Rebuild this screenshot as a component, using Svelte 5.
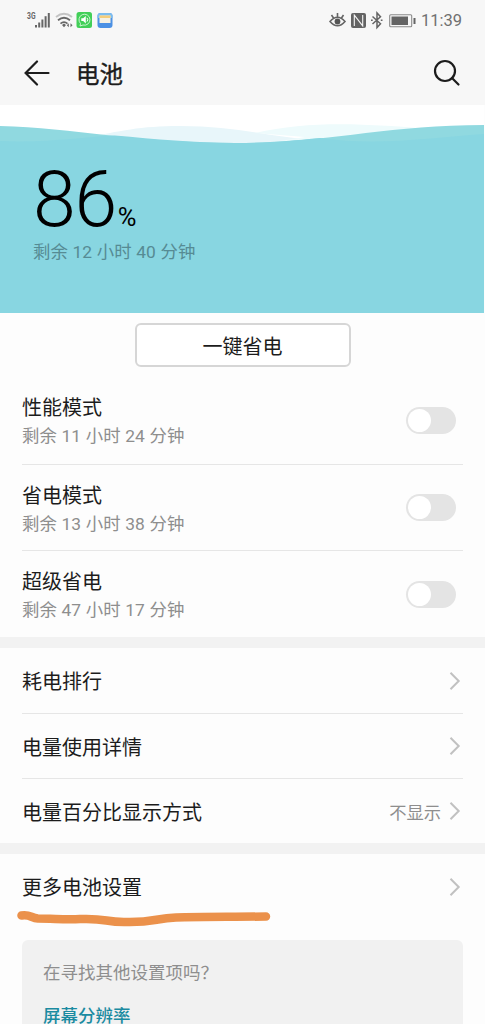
<script lang="ts">
  type Mode = {
    name: string;
    remaining: string;
    enabled: boolean;
  };

  type Link = {
    label: string;
    value?: string;
  };

  let modes = $state<Mode[]>([
    { name: "性能模式", remaining: "剩余 11 小时 24 分钟", enabled: false },
    { name: "省电模式", remaining: "剩余 13 小时 38 分钟", enabled: false },
    { name: "超级省电", remaining: "剩余 47 小时 17 分钟", enabled: false },
  ]);

  const links: Link[] = [
    { label: "耗电排行" },
    { label: "电量使用详情" },
    { label: "电量百分比显示方式", value: "不显示" },
  ];

  const level = 86;
</script>

{#snippet chevron()}
  <svg class="chevron" width="12" height="20" viewBox="0 0 12 20" aria-hidden="true">
    <path d="M1.5 1.8 9.7 10l-8.2 8.2" />
  </svg>
{/snippet}

<div class="screen">
  <header class="top">
    <div class="status">
      <svg width="90" height="20" viewBox="0 0 90 20" aria-hidden="true">
        <text x="1" y="9" class="network" textLength="8.5" lengthAdjust="spacingAndGlyphs">3G</text>
        <g fill="#666">
          <rect x="9" y="15" width="2" height="2.5" />
          <rect x="12.2" y="12.5" width="2" height="5" />
          <rect x="15.4" y="9.5" width="2" height="8" />
          <rect x="18.6" y="6.2" width="2" height="11.3" />
          <rect x="21.8" y="3" width="2" height="14.5" />
        </g>
        <g fill="none" stroke-width="1.8">
          <path d="M30 7q8-6.500 16 0" stroke="#c4c4c4" />
          <path d="M32 10.300q6-5 12 0M34.500 13.600q3.500-3 7 0" stroke="#666" />
        </g>
        <path d="m36 15 2-1.500 2 1.500-2 2.200zM40.800 15.200l2-2v4zM46.500 15.200l-2-2v4z" fill="#666" />
        <rect x="50.500" y="2" width="15.500" height="16" rx="2.500" fill="#42cf58" />
        <path d="M54 16 54.500 13.500A5.500 5.500 0 1 1 57 15z" fill="none" stroke="#c9f4cf" />
        <path d="M55.300 8.300h1.900l2.600-2.300v7.400l-2.600-2.300h-1.900z" fill="#fff" />
        <path d="M61 7.800q1.500 1.900 0 3.800" fill="none" stroke="#fff" />
        <rect x="71.500" y="3" width="15" height="15" rx="3" fill="#4c91e4" />
        <path d="M71.500 8V6a3 3 0 0 1 3-3h9a3 3 0 0 1 3 3v2z" fill="#7bbdf0" />
        <rect x="73.500" y="5.500" width="11" height="7.500" fill="#f5f1e4" />
        <rect x="73.500" y="5.500" width="11" height="2.500" fill="#f4ce7c" />
      </svg>

      <div class="status-right">
        <svg width="88" height="20" viewBox="0 0 88 20" aria-hidden="true">
          <g fill="none" stroke="#646464" stroke-width="1.600">
            <path d="M1 11.500q7.500-8.500 15 0-7.500 8.500-15 0zM2.500 5l2 3M8.500 3v3.500M14.500 5l-2 3" />
          </g>
          <circle cx="8.500" cy="11.500" r="2.900" fill="#555" />
          <rect x="22" y="3" width="15" height="15" rx="2" fill="#646464" />
          <path d="M25.300 16V5l8.200 10.500M25.500 5.500 33.700 16V5" fill="none" stroke="#f7f7f7" stroke-width="1.100" />
          <path d="m27.800 3 4 5V3M27.200 18v-5l4 5" fill="#646464" />
          <path d="m43.500 6.500 8 7.300-3.500 3.700V3l3.500 3.700-8 7.300" fill="none" stroke="#646464" stroke-width="1.500" />
          <path d="M42 10.200h1.700M51.800 10.200h1.700" stroke="#646464" stroke-width="1.500" />
          <rect x="60.700" y="4.700" width="22" height="12" rx="1" fill="none" stroke="#8a8a8a" stroke-width="1.100" />
          <rect x="62.500" y="6.500" width="16.500" height="8.500" fill="#646464" />
          <rect x="84.500" y="8" width="2" height="6" fill="#646464" />
        </svg>
        <span class="clock">11:39</span>
      </div>
    </div>

    <div class="title-bar">
      <svg width="26" height="26" viewBox="0 0 26 26" aria-label="返回">
        <path d="M13 1.500 1.600 13 13 24.500M1.600 13H24.500" />
      </svg>
      <h1>电池</h1>
      <svg width="28" height="28" viewBox="0 0 28 28" aria-label="搜索">
        <circle cx="12" cy="12" r="10" />
        <path d="m19 19 6.500 6.500" />
      </svg>
    </div>
  </header>

  <section class="battery">
    <svg class="wave" width="484" height="27" viewBox="0 0 484 27" aria-hidden="true">
      <path d="M85 17C120 10 140 5 180 5c55 0 85 10 135 14v8H85z" fill="#e8f6fa" />
      <path d="M255 12C310 0 360 2 440 9v18H235L305 16z" fill="#eefbfc" />
      <path d="M0 5C75 7 135 22 235 22 330 22 385 4 484 4v23H0z" fill="#90d9e0" />
      <path d="M0 20C50 22 80 16 115 14.500 155 18 195 22 235 22c30 0 55-2 85-5 55 8 110 0 164-4v14H0z" fill="#88d6e1" />
    </svg>
    <div class="charge">
      <p class="level">{level}<span>%</span></p>
      <p class="remaining">剩余 12 小时 40 分钟</p>
    </div>
  </section>

  <div class="action">
    <button type="button">一键省电</button>
  </div>

  <ul class="list">
    {#each modes as mode}
      <li class="mode">
        <div>
          <h2>{mode.name}</h2>
          <p>{mode.remaining}</p>
        </div>
        <button
          class="toggle"
          class:on={mode.enabled}
          type="button"
          role="switch"
          aria-checked={mode.enabled}
          aria-label={mode.name}
          onclick={() => (mode.enabled = !mode.enabled)}
        ></button>
      </li>
    {/each}
  </ul>

  <ul class="list separated">
    {#each links as link}
      <li class="link">
        <span>{link.label}</span>
        {#if link.value}
          <small>{link.value}</small>
        {/if}
        {@render chevron()}
      </li>
    {/each}
  </ul>

  <div class="separated more">
    <div class="link">
      <span>更多电池设置</span>
      {@render chevron()}
    </div>
    <svg class="marker" width="260" height="20" viewBox="0 0 260 20" aria-hidden="true">
      <path d="M5.500 6.500C14 5 15 9 22 9.500C38 9.500 50 11 64 10C91 9 88 13 108 13C138 14 139 9 160 8.500C185 7.500 215 8 250 7.500" />
    </svg>
  </div>

  <aside class="hint">
    <p>在寻找其他设置项吗？</p>
    <strong>屏幕分辨率</strong>
  </aside>
</div>

<style>
  :global(body) {
    margin: 0;
  }

  .screen {
    display: flex;
    flex-direction: column;
    height: 1024px;
    overflow: hidden;
    background: #fdfdfd;
    color: #1c1c1c;
    font-family: Roboto, "Noto Sans CJK SC", sans-serif;
  }

  .screen > * {
    flex-shrink: 0;
  }

  h1,
  h2,
  p,
  ul {
    margin: 0;
    padding: 0;
    font-weight: 400;
    list-style: none;
  }

  .top {
    height: 105px;
    background: #f7f7f7;
  }

  .status {
    display: flex;
    justify-content: space-between;
    align-items: center;
    height: 40px;
    padding: 0 23px 0 26px;
  }

  .status svg {
    display: block;
  }

  .network {
    font: 700 9px Roboto, sans-serif;
    fill: #666;
  }

  .status-right {
    display: flex;
    align-items: center;
    gap: 4px;
  }

  .clock {
    padding-top: 2px;
    font-size: 16.5px;
    line-height: 20px;
    color: #707070;
  }

  .title-bar {
    display: flex;
    align-items: center;
    height: 66px;
    padding: 0 24px;
  }

  .title-bar svg {
    fill: none;
    stroke: #1c1c1c;
    stroke-width: 2.2;
    stroke-linecap: round;
  }

  .title-bar h1 {
    flex: 1;
    margin-left: 26px;
    padding-top: 3px;
    font-size: 23.5px;
    line-height: 34px;
    -webkit-text-stroke: 0.4px;
  }

  .battery {
    height: 208px;
    margin-right: 1px;
    background: linear-gradient(#fff 40px, #88d6e1 40px);
  }

  .wave {
    display: block;
    padding-top: 16px;
  }

  .charge {
    padding: 14px 0 0 33px;
  }

  .level {
    height: 74px;
    font-size: 77px;
    font-weight: 300;
    line-height: 76px;
    letter-spacing: -1.3px;
    color: #000;
  }

  .level span {
    margin-left: 2px;
    font-size: 25.5px;
    font-weight: 400;
  }

  .remaining {
    margin-top: 2px;
    font-size: 17.4px;
    line-height: 28px;
    word-spacing: 0.4px;
    color: #568b94;
  }

  .action {
    display: flex;
    justify-content: center;
    height: 64px;
    padding-top: 10px;
    box-sizing: border-box;
  }

  .action button {
    width: 216px;
    height: 44px;
    border: 2px solid #d6d6d6;
    border-radius: 6px;
    background: #fff;
    color: #1c1c1c;
    font: inherit;
    font-size: 20px;
  }

  .mode,
  .link {
    display: flex;
    align-items: center;
    box-sizing: border-box;
  }

  .list li {
    margin: 0 22px;
  }

  .list li + li {
    border-top: 1px solid #e6e6e6;
  }

  .mode {
    justify-content: space-between;
    height: 86.7px;
    padding-right: 7px;
  }

  .mode div {
    padding-top: 4px;
  }

  .mode h2 {
    font-size: 20px;
    line-height: 29px;
  }

  .mode p {
    font-size: 17.4px;
    line-height: 27px;
    word-spacing: 0.4px;
    color: #8e8e8e;
  }

  .toggle {
    display: flex;
    width: 50px;
    height: 27px;
    padding: 2px;
    border: 0;
    border-radius: 14px;
    background: #e4e4e4;
  }

  .toggle::before {
    content: "";
    width: 23px;
    height: 23px;
    border-radius: 50%;
    background: #fff;
  }

  .toggle.on {
    justify-content: flex-end;
    background: #1a90a5;
  }

  .separated {
    border-top: 11px solid #f2f2f2;
  }

  .link {
    height: 65px;
    padding-right: 2px;
    font-size: 20px;
  }

  .link span {
    flex: 1;
  }

  .link small {
    margin-right: 8px;
    font-size: 17.3px;
    color: #8e8e8e;
  }

  .chevron {
    fill: none;
    stroke: #c1c1c1;
    stroke-width: 2;
  }

  .more {
    height: 86px;
    padding: 0 22px;
  }

  /* hand-drawn stroke runs slightly past the label's left edge */
  .marker {
    display: block;
    margin: -10px 0 0 -6px;
    fill: none;
    stroke: #eb914b;
    stroke-width: 8.5;
    stroke-linecap: round;
  }

  .hint {
    flex: 1 0 auto;
    margin: 0 22px;
    padding: 19px 21px 0;
    border-radius: 6px 6px 0 0;
    background: #f1f1f1;
    font-size: 17.5px;
    line-height: 28px;
  }

  .hint p {
    color: #8e8e8e;
  }

  .hint strong {
    display: block;
    margin-top: 15px;
    font-weight: 500;
    color: #1b8ba1;
  }
</style>
